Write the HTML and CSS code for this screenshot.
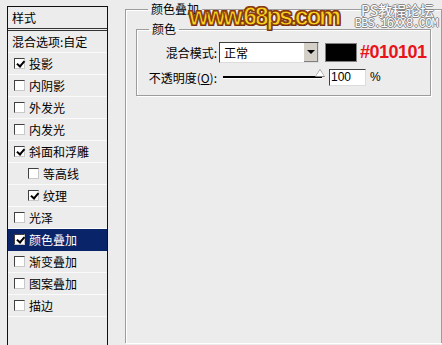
FILE: index.html
```html
<!DOCTYPE html>
<html lang="zh-CN">
<head>
    <meta charset="UTF-8">
    <title>图层样式 - 颜色叠加</title>
    <link rel="stylesheet" href="styles.css">
</head>
<body>
    <div class="style-list">
        <div class="list-head">样式</div>
        <div class="list-item">混合选项:自定</div>
        <div class="list-item"><span class="check on"></span>投影</div>
        <div class="list-item"><span class="check"></span>内阴影</div>
        <div class="list-item"><span class="check"></span>外发光</div>
        <div class="list-item"><span class="check"></span>内发光</div>
        <div class="list-item"><span class="check on"></span>斜面和浮雕</div>
        <div class="list-item sub"><span class="check"></span>等高线</div>
        <div class="list-item sub"><span class="check on"></span>纹理</div>
        <div class="list-item"><span class="check"></span>光泽</div>
        <div class="list-item selected"><span class="check on"></span>颜色叠加</div>
        <div class="list-item"><span class="check"></span>渐变叠加</div>
        <div class="list-item"><span class="check"></span>图案叠加</div>
        <div class="list-item"><span class="check"></span>描边</div>
    </div>

    <fieldset class="group outer">
        <legend>颜色叠加</legend>
        <fieldset class="group inner">
            <legend>颜色</legend>
            <div class="form-row">
                <label class="field-label">混合模式:</label>
                <div class="select-box">
                    <span class="select-value">正常</span>
                    <span class="select-arrow"></span>
                </div>
                <span class="swatch"></span>
                <span class="hex">#010101</span>
            </div>
            <div class="form-row">
                <label class="field-label">不透明度(<u>O</u>):</label>
                <div class="slider"><span class="thumb"></span></div>
                <span class="num-input">100</span>
                <span class="unit">%</span>
            </div>
        </fieldset>
    </fieldset>

    <div class="watermark">www.68ps.com</div>
    <div class="forum-mark">
        <span class="forum-name">PS教程论坛</span>
        <span class="forum-url">BBS.16XX8.COM</span>
    </div>
</body>
</html>
```

FILE: styles.css
```css
html {
    overflow: hidden;
}
body {
    margin: 0;
    height: 345px;
    overflow: hidden;
    display: flex;
    align-items: flex-start;
    background-color: #ececec;
    font-family: "Noto Sans CJK SC", "Noto Sans", sans-serif;
    font-size: 12px;
    color: #000000;
}

/* left style list */
.style-list {
    margin: 6px 0 0 7px;
    width: 99px;
    height: 338px;
    border: 1px solid #111111;
    border-bottom: none;
    background-color: #ececec;
    flex-shrink: 0;
}
.list-head {
    height: 21px;
    line-height: 21px;
    padding-left: 4px;
    border-bottom: 3px double #333333;
}
.list-item {
    height: 21px;
    display: flex;
    align-items: center;
    gap: 4px;
    padding-left: 4px;
    border-bottom: 1px solid #fafafa;
}
.list-item .check {
    margin-left: 2px;
}
.list-item.sub {
    padding-left: 18px;
}
.list-item.selected {
    background-color: #0a246a;
    color: #ffffff;
    border-bottom-color: #0a246a;
}
.check {
    width: 9px;
    height: 9px;
    background-color: #ffffff;
    border-top: 1px solid #404040;
    border-left: 1px solid #404040;
    border-right: 1px solid #c8c8c8;
    border-bottom: 1px solid #c8c8c8;
    position: relative;
    flex-shrink: 0;
}
.check.on::after {
    content: "";
    position: absolute;
    left: 1px;
    top: 1px;
    width: 6px;
    height: 3px;
    border-left: 2px solid #000000;
    border-bottom: 2px solid #000000;
    transform: rotate(-50deg) translate(0px, 1px);
}

/* group boxes */
.group {
    margin: 0;
    border: 1px solid #9c9c9c;
    box-shadow: 1px 1px 0 #ffffff, inset 1px 1px 0 #ffffff;
}
.group legend {
    padding: 0 3px;
    margin-left: 12px;
    line-height: 14px;
}
.outer {
    margin: 2px 0 0 17px;
    width: 308px;
    height: 340px;
    border-bottom: none;
    padding: 0 5px 0 10px;
}
.inner {
    margin-top: 6px;
    width: 293px;
    padding: 5px 0 7px 0;
}
.inner legend {
    margin-left: 12px;
}

.form-row {
    display: flex;
    align-items: center;
    height: 22px;
}
.form-row + .form-row {
    margin-top: 3px;
}
.field-label {
    width: 80px;
    text-align: right;
    padding-right: 2px;
    flex-shrink: 0;
}
.select-box {
    width: 98px;
    height: 19px;
    display: flex;
    background-color: #ffffff;
    border-top: 1px solid #404040;
    border-left: 1px solid #404040;
    border-right: 1px solid #dcdcdc;
    border-bottom: 1px solid #dcdcdc;
}
.select-value {
    flex: 1;
    line-height: 19px;
    padding-left: 4px;
}
.select-arrow {
    width: 14px;
    background-color: #d4d0c8;
    border-left: 1px solid #ffffff;
    box-shadow: inset -1px -1px 0 #808080;
    position: relative;
}
.select-arrow::after {
    content: "";
    position: absolute;
    left: 3px;
    top: 7px;
    border-left: 4px solid transparent;
    border-right: 4px solid transparent;
    border-top: 4px solid #000000;
}
.swatch {
    width: 30px;
    height: 17px;
    margin-left: 6px;
    background-color: #010101;
    border: 1px solid #808080;
}
.hex {
    margin-left: 3px;
    font-family: "Liberation Sans", Arial, sans-serif;
    font-weight: bold;
    font-size: 18px;
    color: #e8141c;
    letter-spacing: -0.5px;
}
.slider {
    width: 99px;
    height: 2px;
    margin-left: 4px;
    background-color: #000000;
    border-bottom: 1px solid #ffffff;
    position: relative;
}
.thumb {
    position: absolute;
    right: -3px;
    top: -7px;
    width: 0;
    height: 0;
    border-left: 5px solid transparent;
    border-right: 5px solid transparent;
    border-bottom: 8px solid #808080;
}
.thumb::after {
    content: "";
    position: absolute;
    left: -4px;
    top: 1px;
    border-left: 4px solid transparent;
    border-right: 4px solid transparent;
    border-bottom: 6px solid #ffffff;
}
.num-input {
    width: 34px;
    height: 15px;
    margin-left: 7px;
    line-height: 15px;
    padding-left: 1px;
    background-color: #ffffff;
    border-top: 1px solid #404040;
    border-left: 1px solid #404040;
    border-right: 1px solid #dcdcdc;
    border-bottom: 1px solid #dcdcdc;
    font-family: "Liberation Sans", Arial, sans-serif;
}
.unit {
    margin-left: 4px;
    font-family: "Liberation Sans", Arial, sans-serif;
}

/* watermarks laid over the dialog */
.watermark {
    position: absolute;
    left: 189px;
    top: 2px;
    font-family: "Liberation Sans", Arial, sans-serif;
    font-weight: bold;
    font-size: 25px;
    color: #f8d21c;
    -webkit-text-stroke: 1px #8a3a10;
    text-shadow: 1px 1px 0 #6a2a08, -1px -1px 0 #8a3a10, 1px -1px 0 #8a3a10, -1px 1px 0 #8a3a10;
    letter-spacing: -2.5px;
}
.forum-mark {
    position: absolute;
    left: 356px;
    top: 2px;
    width: 82px;
    display: flex;
    flex-direction: column;
    align-items: flex-end;
    color: #ffffff;
    text-shadow: 1px 0 0 #888888, -1px 0 0 #888888, 0 1px 0 #888888, 0 -1px 0 #888888;
}
.forum-name {
    font-size: 14px;
    line-height: 16px;
    margin-right: 4px;
}
.forum-url {
    font-family: "Liberation Mono", monospace;
    font-size: 12px;
    line-height: 13px;
    letter-spacing: -0.8px;
}
```
